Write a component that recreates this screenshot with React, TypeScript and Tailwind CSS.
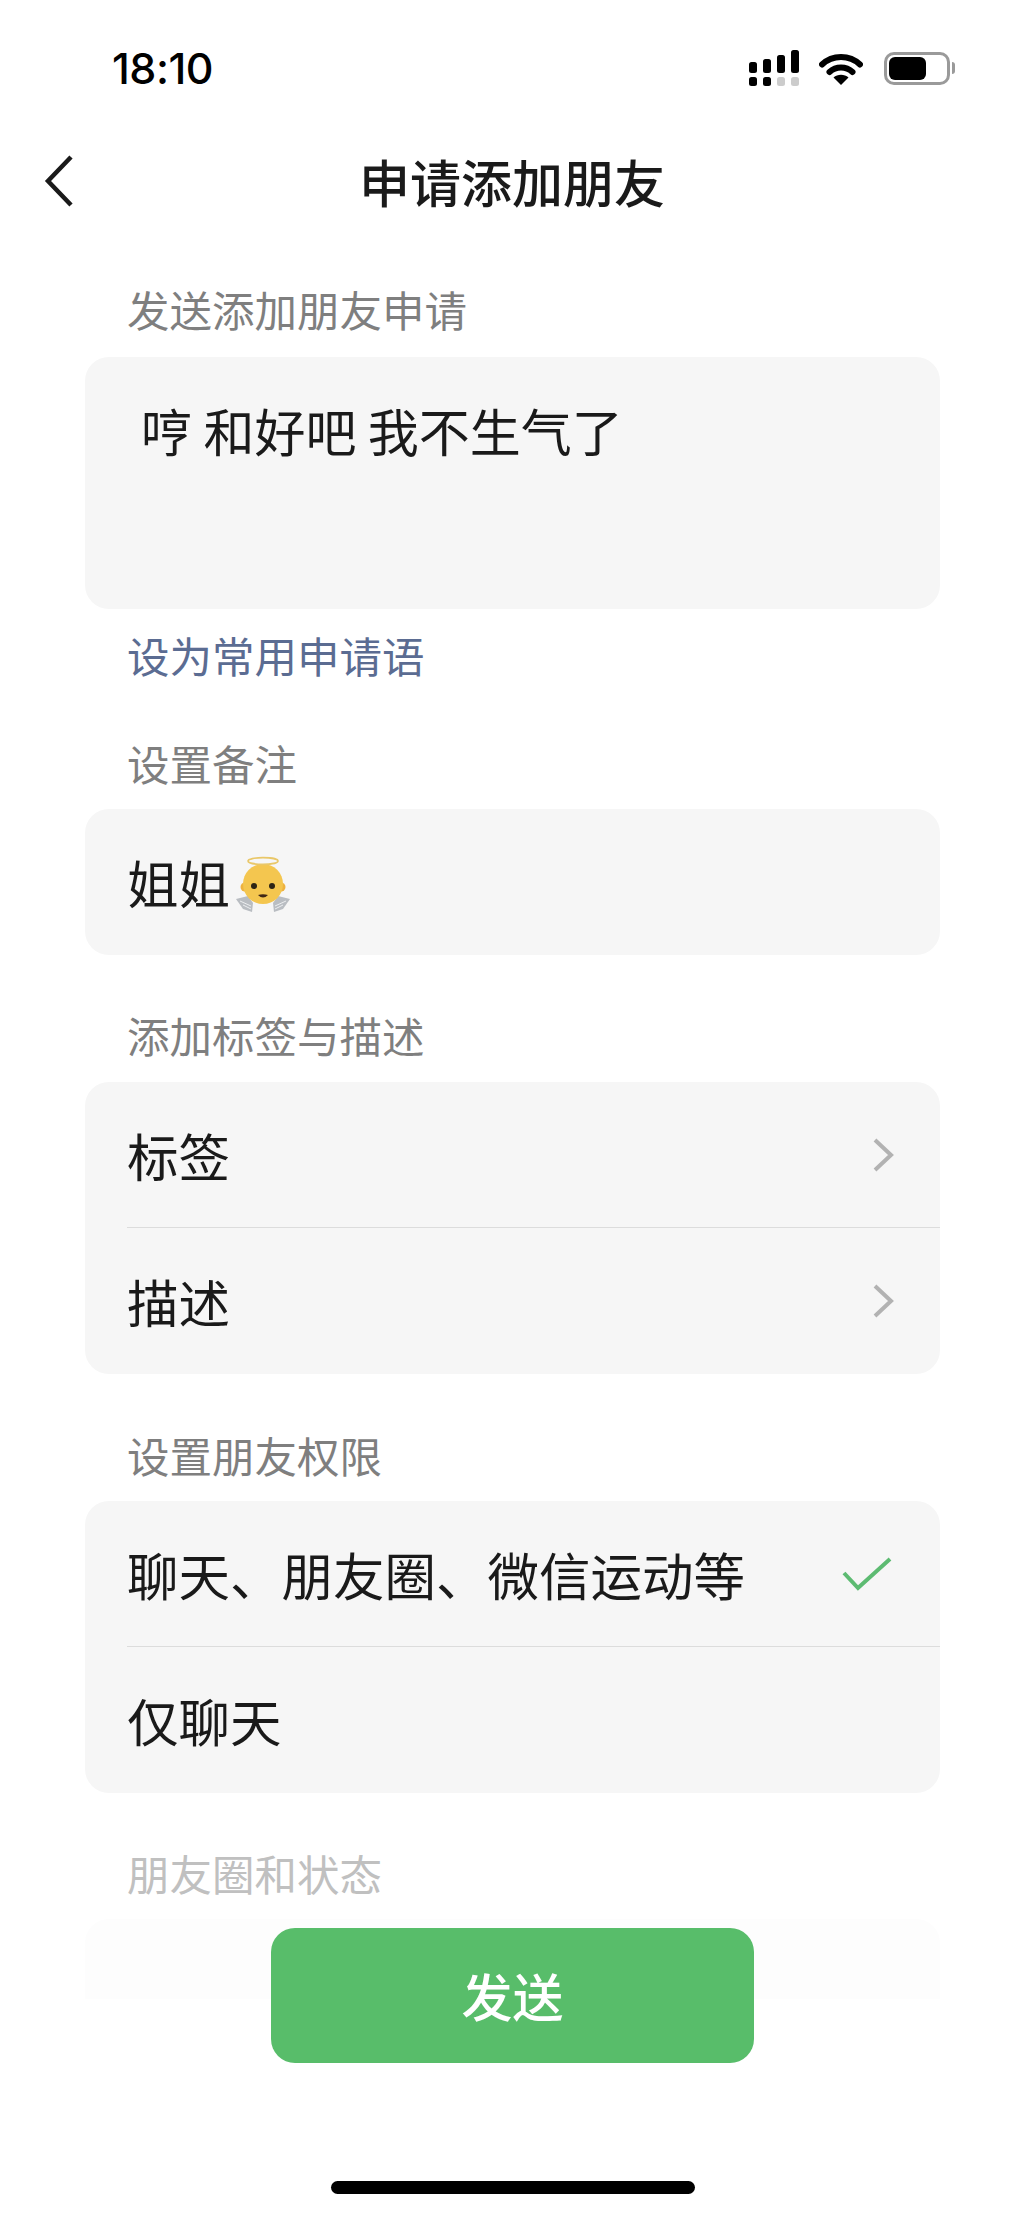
import React from "react";

const cjk = "font-['Noto_Sans_CJK_SC','Noto_Sans',sans-serif]";

const SignalIcon = () => (
  <svg width="52" height="38" viewBox="0 0 52 38" className="block">
    <rect x="1" y="13" width="8" height="11" rx="2.5" fill="#000" />
    <rect x="15" y="10" width="8" height="14" rx="2.5" fill="#000" />
    <rect x="29" y="6" width="8" height="18" rx="2.5" fill="#000" />
    <rect x="43" y="1" width="8" height="23" rx="2.5" fill="#000" />
    <rect x="1" y="28" width="8" height="9" rx="2.5" fill="#000" />
    <rect x="15" y="28" width="8" height="9" rx="2.5" fill="#000" />
    <rect x="29" y="28" width="8" height="9" rx="2.5" fill="#cccccc" />
    <rect x="43" y="28" width="8" height="9" rx="2.5" fill="#cccccc" />
  </svg>
);

const WifiIcon = () => (
  <svg width="44" height="33" viewBox="0 0 44 33" className="block">
    <path d="M3 12.5C13.5 2.5 30.5 2.5 41 12.5" fill="none" stroke="#000" strokeWidth="6" strokeLinecap="round" />
    <path d="M10.5 20C17 14 27 14 33.5 20" fill="none" stroke="#000" strokeWidth="6" strokeLinecap="round" />
    <path d="M14.5 25.5C18.5 21.8 25.5 21.8 29.5 25.5L22 33Z" fill="#000" />
  </svg>
);

const BatteryIcon = () => (
  <div className="flex items-center">
    <div className="w-[66px] h-[33px] rounded-[10px] border-[3px] border-[#9a9a9a] p-[2px]">
      <div className="w-[37px] h-full rounded-[6px] bg-black" />
    </div>
    <div className="ml-[2px] w-[3px] h-[12px] rounded-r-full bg-[#9a9a9a]" />
  </div>
);

const BackIcon = () => (
  <svg width="32" height="54" viewBox="0 0 32 54" className="block">
    <path d="M28 3L5 27L28 51" fill="none" stroke="#1a1a1a" strokeWidth="4.5" />
  </svg>
);

const Chevron = () => (
  <svg width="22" height="36" viewBox="0 0 22 36" className="block">
    <path d="M3 3L19 18L3 33" fill="none" stroke="#b2b2b2" strokeWidth="4" />
  </svg>
);

const Check = () => (
  <svg width="50" height="36" viewBox="0 0 50 36" className="block">
    <path d="M2 17L16 32L48 3" fill="none" stroke="#5dbb72" strokeWidth="4" />
  </svg>
);

// baby angel emoji
const AngelEmoji = () => (
  <svg width="58" height="58" viewBox="0 0 58 58" className="block">
    <g fill="#b9bdc2">
      <path d="M2 43L14 40L19 47L18 56L9 53Z" />
      <path d="M56 43L44 40L39 47L40 56L49 53Z" />
    </g>
    <g stroke="#eceef0" strokeWidth="1" fill="none">
      <path d="M6 45L17 50M9 49L17 53" />
      <path d="M52 45L41 50M49 49L41 53" />
    </g>
    <circle cx="11" cy="31" r="4.5" fill="#eeb23f" />
    <circle cx="47" cy="31" r="4.5" fill="#eeb23f" />
    <circle cx="29" cy="28" r="20" fill="#f4c64f" />
    <ellipse cx="29" cy="5" rx="15" ry="3.4" fill="none" stroke="#e9c768" strokeWidth="1.6" />
    <circle cx="20" cy="30" r="3" fill="#2d2415" />
    <circle cx="38" cy="30" r="3" fill="#2d2415" />
    <path d="M24 39Q29 37.5 34 39Q29 44 24 39Z" fill="#3f2615" />
  </svg>
);

const Label = ({ text, className = "" }: { text: string; className?: string }) => (
  <div className={`h-[60px] flex items-center pl-[42px] text-[42.5px] leading-[60px] ${className}`}>{text}</div>
);

const Row = ({ text, right, divider }: { text: string; right?: React.ReactNode; divider?: boolean }) => (
  <div className={`h-[146px] flex items-center justify-between ml-[42px] ${divider ? "border-b border-[#dcdcdc]" : ""}`}>
    <span className="text-[51.5px] leading-[72px] text-[#1a1a1a]">{text}</span>
    {right}
  </div>
);

export default function App() {
  return (
    <div className={`relative w-[1024px] h-[2216px] overflow-hidden bg-white ${cjk}`}>
      <div className="h-[136px] flex items-center justify-between pl-[112px] pr-[69px]">
        <span className="font-['Inter',sans-serif] font-medium text-[43px] leading-none text-black tracking-[-0.5px]">18:10</span>
        <div className="flex items-center">
          <SignalIcon />
          <div className="ml-[19px]"><WifiIcon /></div>
          <div className="ml-[21px]"><BatteryIcon /></div>
        </div>
      </div>

      <div className="relative h-[90px] flex items-center justify-center">
        <div className="absolute left-[43px] top-[18px]"><BackIcon /></div>
        <h1 className="text-[51px] font-medium leading-none text-[#1a1a1a]">申请添加朋友</h1>
      </div>

      <div className="mx-[85px] w-[855px]">
        <Label text="发送添加朋友申请" className="mt-[53px] text-[#7f7f7f]" />
        <div className="mt-[18px] h-[252px] rounded-[24px] bg-[#f6f6f6] pl-[56px] pt-[37px]">
          <span className="text-[51px] leading-[72px] text-[#1a1a1a] whitespace-pre">哼 和好吧 我不生气了</span>
        </div>
        <Label text="设为常用申请语" className="mt-[16px] text-[#5b6c92]" />

        <Label text="设置备注" className="mt-[48px] text-[#7f7f7f]" />
        <div className="mt-[16px] h-[146px] rounded-[24px] bg-[#f6f6f6] pl-[42px] flex items-center">
          <span className="text-[51.5px] leading-[72px] text-[#1a1a1a]">姐姐</span>
          <span className="ml-[4px] mt-[6px]"><AngelEmoji /></span>
        </div>

        <Label text="添加标签与描述" className="mt-[50px] text-[#7f7f7f]" />
        <div className="mt-[17px] rounded-[24px] bg-[#f6f6f6]">
          <Row text="标签" divider right={<div className="mr-[46px]"><Chevron /></div>} />
          <Row text="描述" right={<div className="mr-[46px]"><Chevron /></div>} />
        </div>

        <Label text="设置朋友权限" className="mt-[51px] text-[#7f7f7f]" />
        <div className="mt-[16px] rounded-[24px] bg-[#f6f6f6]">
          <Row text="聊天、朋友圈、微信运动等" divider right={<div className="mr-[48px]"><Check /></div>} />
          <Row text="仅聊天" />
        </div>

        <Label text="朋友圈和状态" className="mt-[50px] text-[#c0c0c0]" />
        <div className="mt-[16px] h-[80px] rounded-t-[24px] bg-[#fdfdfd]" />
      </div>

      <button className="absolute left-[271px] top-[1928px] w-[483px] h-[135px] rounded-[24px] bg-[#58bd6a] text-white text-[51px] font-medium leading-none flex items-center justify-center">
        发送
      </button>
      <div className="absolute left-[331px] top-[2181px] w-[364px] h-[13px] rounded-full bg-black" />
    </div>
  );
}
